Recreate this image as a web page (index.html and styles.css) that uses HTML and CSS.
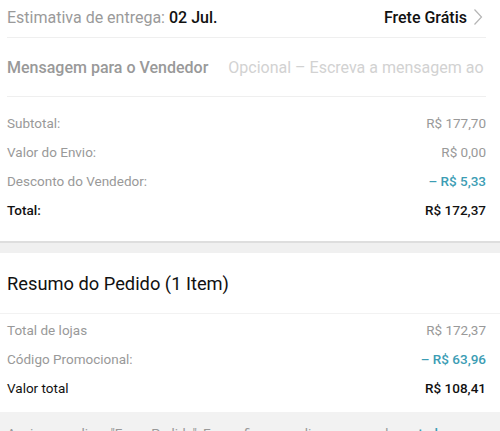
FILE: index.html
```html
<!DOCTYPE html>
<html lang="pt-BR">
<head>
<meta charset="utf-8">
<link rel="stylesheet" href="styles.css">
</head>
<body>
<div class="page">
  <section class="card shop">
    <div class="row delivery">
      <div class="delivery-left">Estimativa de entrega: <b class="date">02 Jul.</b></div>
      <div class="delivery-right">Frete Grátis
        <svg class="chev" width="10" height="18" viewBox="0 0 10 18"><path d="M1.5 1.5 L8.5 9 L1.5 16.5" fill="none" stroke="#b5b5b5" stroke-width="1.2"/></svg>
      </div>
    </div>
    <div class="row message">
      <span class="msg-label">Mensagem para o Vendedor</span>
      <span class="msg-input">Opcional – Escreva a mensagem ao vendedor</span>
    </div>
    <div class="lines">
      <div class="line"><span>Subtotal:</span><span>R$ 177,70</span></div>
      <div class="line"><span>Valor do Envio:</span><span>R$ 0,00</span></div>
      <div class="line"><span>Desconto do Vendedor:</span><span class="disc">– R$ 5,33</span></div>
      <div class="line total"><span>Total:</span><span>R$ 172,37</span></div>
    </div>
  </section>
  <div class="band"></div>
  <section class="card summary">
    <h2 class="title">Resumo do Pedido (1 Item)</h2>
    <div class="lines lines2">
      <div class="line"><span>Total de lojas</span><span>R$ 172,37</span></div>
      <div class="line"><span>Código Promocional:</span><span class="disc">– R$ 63,96</span></div>
      <div class="line total2"><span>Valor total</span><span class="strong">R$ 108,41</span></div>
    </div>
  </section>
  <footer class="terms">Assim que clicar "Fazer Pedido", Eu confirmo que li e que reconheço <span class="link">todos os</span> <span class="link">termos e políticas</span></footer>
</div>
</body>
</html>
```
FILE: styles.css
```css
html, body { margin: 0; padding: 0; background: #fff; }
body { font-family: Roboto, "Noto Sans", sans-serif; color: #222; width: 500px; overflow: hidden; }
.page { display: flex; flex-direction: column; }
.card { background: #fff; }
.shop { padding: 0 14px 0 7px; }
.row { display: flex; align-items: center; border-bottom: 1px solid #efefef; }
.delivery { height: 40px; margin-top: -3px; justify-content: space-between; font-size: 16px; color: #9a9a9a; }
.date { color: #111; font-weight: 500; }
.delivery-right { display: flex; align-items: center; gap: 6px; color: #111; font-weight: 500; margin-right: 3px; }
.chev { display: block; }
.message { height: 58px; font-size: 16px; gap: 20px; white-space: nowrap; overflow: hidden; }
.msg-label { color: #999; font-weight: 500; }
.msg-input { color: #d2d2d2; }
.lines { padding: 11px 0 17px; display: flex; flex-direction: column; }
.line { height: 29px; display: flex; justify-content: space-between; align-items: center; font-size: 13.5px; color: #999; }
.disc { color: #3c9db4; font-weight: 500; }
.total { color: #111; font-weight: 500; }
.band { height: 10px; background: #f0f0f0; border-top: 2px solid #dedede; }
.summary { padding: 0; }
.title { margin: 0; font-size: 18.3px; font-weight: 400; color: #111; height: 60px; display: flex; align-items: center; padding-left: 7px; border-bottom: 1px solid #f2f2f2; }
.lines2 { padding: 1px 14px 10px 7px; }
.total2 { color: #111; }
.strong { font-weight: 500; }
.terms { background: #f2f2f2; padding: 12px 14px 12px 7px; font-size: 13.6px; line-height: 18px; color: #999; }
.link { color: #3c9db4; font-weight: 500; }
```
